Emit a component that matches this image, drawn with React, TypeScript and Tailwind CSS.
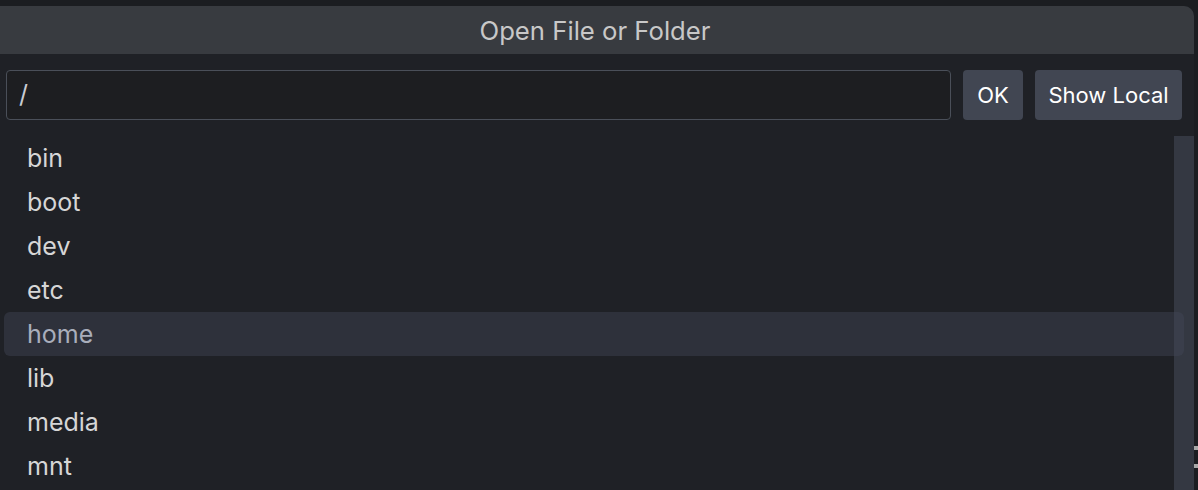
import React from "react";

const items = ["bin", "boot", "dev", "etc", "home", "lib", "media", "mnt"];

export default function App() {
  return (
    <div
      className="relative w-[1198px] h-[490px] overflow-hidden bg-[#1b1d21] pt-[6px] pr-[4px]"
      style={{ fontFamily: "Inter, 'Noto Sans', sans-serif" }}
    >
      <div className="flex h-full flex-col overflow-hidden rounded-tr-[10px] bg-[#1f2126]">
        <div className="flex h-[48px] shrink-0 items-center justify-center bg-[#383b40] pt-[2px] pr-[4px] text-[25.7px] text-[#c8c8c8]">
          Open File or Folder
        </div>
        <div className="flex shrink-0 gap-[12px] pt-[16px] pl-[6px] pr-[12px]">
          <div className="flex h-[50px] flex-1 items-center rounded-[4px] border border-[#4a4f59] bg-[#1d1e21] px-[12px] text-[25px] text-[#c9ccd3]">
            /
          </div>
          <button className="h-[50px] w-[60px] rounded-[4px] bg-[#414652] text-[22px] text-white">
            OK
          </button>
          <button className="h-[50px] w-[147px] rounded-[4px] bg-[#414652] text-[22px] text-white">
            Show Local
          </button>
        </div>
        <div className="relative mt-[16px] flex-1">
          <div className="absolute right-0 top-0 bottom-0 w-[20px] bg-[#343842]" />
          <div className="relative flex flex-col pl-[4px] pr-[10px]">
            {items.map((it) => (
              <div
                key={it}
                className={
                  it === "home"
                    ? "flex h-[44px] items-center rounded-[6px] bg-[rgba(68,72,87,0.43)] pt-[2px] pl-[23px] text-[25px] text-[#a9aebb]"
                    : "flex h-[44px] items-center pt-[2px] pl-[23px] text-[25px] text-[#d6d6d6]"
                }
              >
                {it}
              </div>
            ))}
          </div>
        </div>
      </div>
      <div className="absolute right-0 top-[446px] h-[4px] w-[4px] bg-[#a8a8a8]" />
      <div className="absolute right-0 top-[464px] h-[4px] w-[4px] bg-[#a8a8a8]" />
    </div>
  );
}
